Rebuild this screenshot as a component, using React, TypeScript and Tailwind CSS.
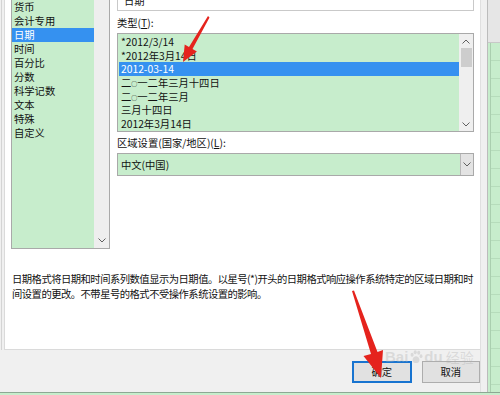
import React from "react";

const Chevron = ({ up = false }: { up?: boolean }) => (
  <svg width="8" height="5" viewBox="0 0 8 5" className="block">
    <polyline
      points={up ? "0.5,4.5 4,1 7.5,4.5" : "0.5,0.5 4,4 7.5,0.5"}
      fill="none"
      stroke="#606060"
      strokeWidth="1"
    />
  </svg>
);

const Ling = () => <span className="text-[6px] align-[1px]">○</span>;

const categories = ["货币", "会计专用", "日期", "时间", "百分比", "分数", "科学记数", "文本", "特殊", "自定义"];

export default function App() {
  const typeRows: { key: string; node: React.ReactNode; sel?: boolean }[] = [
    { key: "a", node: "*2012/3/14" },
    { key: "b", node: "*2012年3月14日" },
    { key: "c", node: "2012-03-14", sel: true },
    { key: "d", node: <>二<Ling />一二年三月十四日</> },
    { key: "e", node: <>二<Ling />一二年三月</> },
    { key: "f", node: "三月十四日" },
    { key: "g", node: "2012年3月14日" },
  ];
  return (
    <div className="relative w-[500px] h-[395px] overflow-hidden bg-[#f0f0f0] text-[10.3px] text-[#111] font-['Noto_Sans_CJK_SC',sans-serif]">
      <div className="flex h-[392px]">
        {/* left gutter */}
        <div className="w-[4px] h-[350px] flex">
          <div className="w-[1px] ml-[1px] bg-[#d4d4d4]" />
        </div>
        {/* main column */}
        <div className="w-[476px] flex flex-col">
          <div className="h-[350px] bg-white border-l border-b border-[#dadada] flex flex-col">
            <div className="flex h-[249px]">
              {/* category list */}
              <div className="ml-[6px] w-[99px] h-[249px] border-x border-b border-[#a9a9a9] bg-[#c7edcc] flex">
                <div className="flex-1 flex flex-col">
                  {categories.map((c) => (
                    <div
                      key={c}
                      className={`h-[14px] leading-[14px] pl-[2px] whitespace-nowrap ${c === "日期" ? "bg-[#3591f0] text-white" : ""}`}
                    >
                      {c}
                    </div>
                  ))}
                </div>
                <div className="w-[15px] bg-[#eeeeee] flex flex-col justify-end items-center pb-[5px]">
                  <Chevron />
                </div>
              </div>
              {/* right column */}
              <div className="ml-[7px] w-[357px] flex flex-col">
                <div className="h-[11px] border-x border-b border-[#c9c9c9] bg-white overflow-hidden">
                  <div className="-mt-[6px] pl-[6px] leading-[14px]">日期</div>
                </div>
                <div className="mt-[5px] h-[14px] leading-[14px]">
                  类型(<span className="underline">T</span>):
                </div>
                <div className="mt-[3px] h-[99px] border border-[#a9a9a9] bg-[#c7edcc] flex">
                  <div className="flex-1 pt-[1px] pl-[1px]">
                    {typeRows.map((t) => (
                      <div
                        key={t.key}
                        className={`h-[13.67px] leading-[13.67px] pl-[2px] whitespace-nowrap ${t.sel ? "bg-[#3591f0] text-white" : ""}`}
                      >
                        {t.node}
                      </div>
                    ))}
                  </div>
                  <div className="w-[14px] bg-[#efefef] flex flex-col items-center">
                    <div className="h-[14px] flex items-center">
                      <Chevron up />
                    </div>
                    <div className="w-[11px] h-[19px] bg-[#cdcdcd]" />
                    <div className="flex-1" />
                    <div className="h-[14px] flex items-center">
                      <Chevron />
                    </div>
                  </div>
                </div>
                <div className="mt-[4px] h-[14px] leading-[14px]">
                  区域设置(国家/地区)(<span className="underline">L</span>):
                </div>
                <div className="mt-[3px] h-[23px] border border-[#a9a9a9] bg-[#c7edcc] flex">
                  <div className="flex-1 pl-[3px] leading-[21px]">中文(中国)</div>
                  <div className="w-[13px] bg-[#e3e3e3] border-l border-[#b8b8b8] flex items-center justify-center">
                    <Chevron />
                  </div>
                </div>
              </div>
            </div>
            <div className="mt-[22px] pl-[7px] leading-[15px] whitespace-nowrap tracking-[-0.5px]">
              <div>日期格式将日期和时间系列数值显示为日期值。以星号(*)开头的日期格式响应操作系统特定的区域日期和时</div>
              <div>间设置的更改。不带星号的格式不受操作系统设置的影响。</div>
            </div>
          </div>
          {/* button bar */}
          <div className="flex pt-[11px] pl-[348px] gap-[10px]">
            <div className="w-[60px] h-[22px] border-2 border-[#1874d0] bg-[#e1e1e1] flex items-center justify-center">
              确定
            </div>
            <div className="w-[59px] h-[22px] border border-[#adadad] bg-[#e1e1e1] flex items-center justify-center">
              取消
            </div>
          </div>
        </div>
        {/* right strip */}
        <div className="w-[7px] bg-[#f0f0f0] border-l border-[#e0e0e0]" />
        <div className="w-[1px] bg-[#bcbcbc]" />
        <div className="w-[12px] flex flex-col">
          <div className="h-[43px] bg-[#e6e6e6] border-b border-[#c8c8c8]" />
          <div className="flex-1 bg-[#c7edcc] flex">
            <div className="w-[2px]" />
            <div className="w-[1px] bg-[#aacfaf]" />
            <div className="flex-1 bg-[repeating-linear-gradient(to_bottom,#c7edcc_0px,#c7edcc_17px,#b6dcbb_17px,#b6dcbb_18px)]" />
          </div>
        </div>
      </div>
      <div className="h-[1px] bg-[#8da893]" />
      <div className="h-[2px] bg-[#c7edcc]" />

      {/* watermark */}
      <div className="absolute left-[385px] top-[349px] flex items-end gap-[1px] text-[rgba(175,175,175,0.35)] font-['Liberation_Sans',sans-serif] font-bold text-[15px] leading-[16px] pointer-events-none">
        <span>Bai</span>
        <svg width="14" height="14" viewBox="0 0 18 18" className="mb-[1px]">
          <g fill="rgba(175,175,175,0.35)">
            <ellipse cx="4" cy="6" rx="2" ry="2.6" />
            <ellipse cx="8" cy="3" rx="2" ry="2.6" />
            <ellipse cx="12.5" cy="3.5" rx="2" ry="2.6" />
            <ellipse cx="15.5" cy="8" rx="1.8" ry="2.4" />
            <path d="M9 8 C5 8 3 14 6 16 C8 17 10 17 12 16 C15 14 13 8 9 8 Z" />
          </g>
        </svg>
        <span>du</span>
        <span className="ml-[2px] font-['Noto_Sans_CJK_SC',sans-serif] font-normal text-[14px]">经验</span>
      </div>

      {/* red arrows */}
      <svg className="absolute left-0 top-0 pointer-events-none" width="500" height="395">
        <polygon
          fill="#e5231d"
          points="208,16 209.5,17.5 192.5,49 196.9,51.4 183,62 184.7,44.6 189,47"
        />
        <polygon
          fill="#e5231d"
          points="352,291 354,290.5 377.5,352 383,350 381,378 363.5,356 371,354"
        />
      </svg>
    </div>
  );
}
